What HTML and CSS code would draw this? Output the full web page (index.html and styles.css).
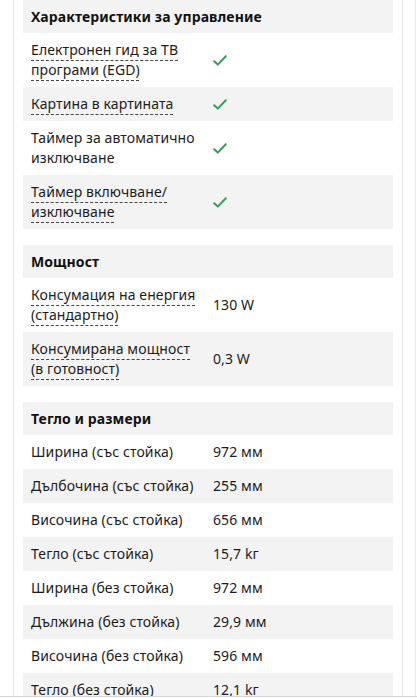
FILE: index.html
```html
<!DOCTYPE html>
<html lang="bg">
<head>
<meta charset="utf-8">
<link rel="stylesheet" href="styles.css">
</head>
<body>
<div class="page">
  <div class="card">
    <section class="spec">
      <h3 class="spec-title">Характеристики за управление</h3>
      <div class="row tall"><div class="label"><span class="tip">Електронен гид за ТВ програми (EGD)</span></div><div class="value"><svg class="check" viewBox="0 0 14 11"><path d="M1.2 6.2 L4.8 9.6 L12.8 1.2" fill="none" stroke="#3c9a5f" stroke-width="2" stroke-linecap="round" stroke-linejoin="round"/></svg></div></div>
      <div class="row"><div class="label"><span class="tip">Картина в картината</span></div><div class="value"><svg class="check" viewBox="0 0 14 11"><path d="M1.2 6.2 L4.8 9.6 L12.8 1.2" fill="none" stroke="#3c9a5f" stroke-width="2" stroke-linecap="round" stroke-linejoin="round"/></svg></div></div>
      <div class="row tall"><div class="label">Таймер за автоматично изключване</div><div class="value"><svg class="check" viewBox="0 0 14 11"><path d="M1.2 6.2 L4.8 9.6 L12.8 1.2" fill="none" stroke="#3c9a5f" stroke-width="2" stroke-linecap="round" stroke-linejoin="round"/></svg></div></div>
      <div class="row tall"><div class="label"><span class="tip">Таймер включване/ изключване</span></div><div class="value"><svg class="check" viewBox="0 0 14 11"><path d="M1.2 6.2 L4.8 9.6 L12.8 1.2" fill="none" stroke="#3c9a5f" stroke-width="2" stroke-linecap="round" stroke-linejoin="round"/></svg></div></div>
    </section>
    <section class="spec">
      <h3 class="spec-title">Мощност</h3>
      <div class="row tall"><div class="label"><span class="tip">Консумация на енергия (стандартно)</span></div><div class="value">130 W</div></div>
      <div class="row tall"><div class="label"><span class="tip">Консумирана мощност (в готовност)</span></div><div class="value">0,3 W</div></div>
    </section>
    <section class="spec">
      <h3 class="spec-title">Тегло и размери</h3>
      <div class="row"><div class="label">Ширина (със стойка)</div><div class="value">972 мм</div></div>
      <div class="row"><div class="label">Дълбочина (със стойка)</div><div class="value">255 мм</div></div>
      <div class="row"><div class="label">Височина (със стойка)</div><div class="value">656 мм</div></div>
      <div class="row"><div class="label">Тегло (със стойка)</div><div class="value">15,7 kг</div></div>
      <div class="row"><div class="label">Ширина (без стойка)</div><div class="value">972 мм</div></div>
      <div class="row"><div class="label">Дължина (без стойка)</div><div class="value">29,9 мм</div></div>
      <div class="row"><div class="label">Височина (без стойка)</div><div class="value">596 мм</div></div>
      <div class="row"><div class="label">Тегло (без стойка)</div><div class="value">12,1 kг</div></div>
    </section>
  </div>
</div>
<div class="bottom-bar"></div>
</body>
</html>
```
FILE: styles.css
```css
html, body {
  margin: 0;
  padding: 0;
  background: #fff;
}
body {
  font-family: "Noto Sans", "Open Sans", sans-serif;
  color: #1c1c1c;
  font-size: 14px;
  letter-spacing: 0.1px;
}
.page {
  width: 416px;
  border-right: 1px solid #ececec;
  box-sizing: border-box;
  padding-left: 13px;
  padding-right: 12px;
  overflow: hidden;
  height: 698px;
}
.card {
  border-left: 1px solid #e3e3e3;
  border-right: 1px solid #e3e3e3;
  padding: 0 9px;
  display: flex;
  flex-direction: column;
  gap: 16px;
}
.spec {
  display: flex;
  flex-direction: column;
}
.spec-title {
  margin: 0;
  background: #f3f3f3;
  height: 33px;
  display: flex;
  align-items: center;
  padding-left: 8px;
  font-size: 14px;
  letter-spacing: 0.1px;
  font-weight: 700;
  color: #111;
}
.row {
  display: grid;
  grid-template-columns: 170px 1fr;
  column-gap: 12px;
  align-items: center;
  padding: 0 8px;
  height: 34px;
  line-height: 20px;
}
.row.tall {
  height: 54px;
}
.spec .row:nth-of-type(even) {
  background: #f3f3f3;
}
.tip {
  text-decoration: underline dashed #444;
  text-decoration-thickness: 1px;
  text-underline-offset: 5px;
}
.value {
  display: flex;
  align-items: center;
}
.check {
  width: 14px;
  height: 11px;
  display: block;
}
.bottom-bar {
  position: fixed;
  left: 0;
  right: 0;
  top: 696px;
  height: 10px;
  background: #fff;
  border-top: 1px solid #d6d6d6;
}
```
